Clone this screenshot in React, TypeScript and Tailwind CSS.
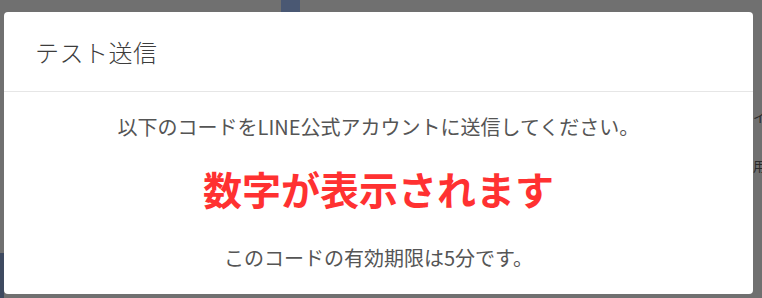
import React from "react";

const font = { fontFamily: '"Noto Sans CJK JP", "Noto Sans", sans-serif' };

const Backdrop = () => {
  return (
    <div className="h-full w-full flex flex-col bg-[#707070]">
      <div className="flex h-[12px]">
        <div className="w-[281px]" />
        <div className="w-[19px] bg-[#4a5873]" />
      </div>
      <div className="flex-1 flex justify-between">
        <div className="w-[4px] flex flex-col">
          <div className="flex-1" />
          <div className="h-[45px] bg-[#3e4a60]" />
        </div>
        <div className="w-[9px] flex flex-col text-[13px] text-[#2a2a2a] leading-none pt-[98px] gap-[36px]">
          <span>イ</span>
          <span>用</span>
        </div>
      </div>
    </div>
  );
};

const App = () => {
  return (
    <div className="relative h-[298px] w-[762px] overflow-hidden" style={font}>
      <Backdrop />
      <div className="absolute inset-0 pt-[12px] pl-[4px]">
        <div className="w-[749px] h-[282px] bg-white rounded-[4px] flex flex-col">
          <div className="h-[80px] flex items-center px-[31px] border-b border-[#e6e6e6]">
            <h2 className="text-[24px] text-[#3c3c3c] tracking-[0.5px] font-light">
              テスト送信
            </h2>
          </div>
          <div className="flex-1 flex flex-col items-center pt-[20px]">
            <p className="text-[20px] leading-[30px] text-[#555555]">
              以下のコードをLINE公式アカウントに送信してください。
            </p>
            <p className="mt-[21px] text-[39px] leading-[50px] font-bold text-[#ff3131]">
              数字が表示されます
            </p>
            <p className="mt-[30px] text-[20px] leading-[30px] text-[#555555]">
              このコードの有効期限は5分です。
            </p>
          </div>
        </div>
      </div>
    </div>
  );
};

export default App;
